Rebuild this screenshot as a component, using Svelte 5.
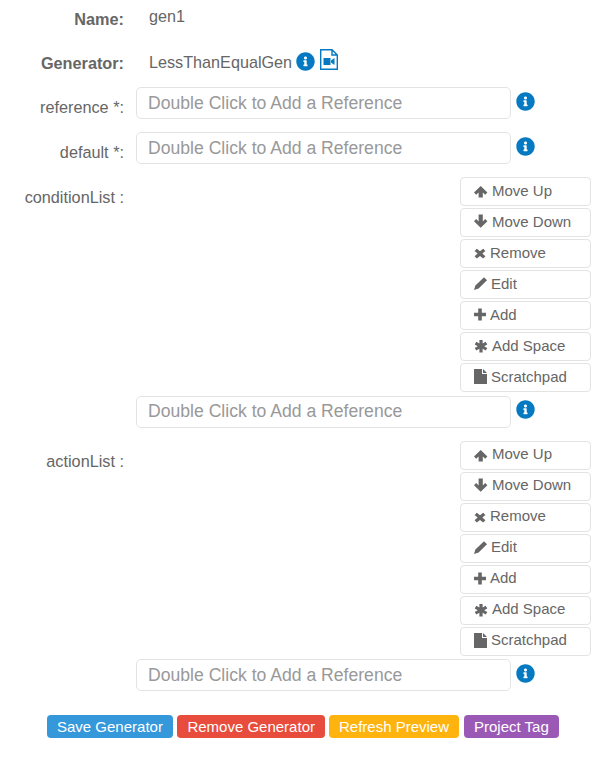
<script>
  const tools = [
    { name: 'up', label: 'Move Up', w: 14 },
    { name: 'down', label: 'Move Down', w: 14 },
    { name: 'remove', label: 'Remove', w: 12 },
    { name: 'edit', label: 'Edit', w: 13 },
    { name: 'add', label: 'Add', w: 12 },
    { name: 'space', label: 'Add Space', w: 14 },
    { name: 'file', label: 'Scratchpad', w: 13 }
  ]
  const glyphs = {
    up: 'M6.7 2 L13.4 8.6 L11.2 10.8 L8.8 8.4 V13.4 H4.6 V8.4 L2.2 10.8 L0 8.6 Z',
    down: 'M6.7 12.8 L13.4 6.2 L11.2 4 L8.8 6.4 V-.4 H4.6 V6.4 L2.2 4 L0 6.2 Z',
    remove: 'M.6 4.9 L2.8 2.7 L6 5.3 L9.2 2.7 L11.4 4.9 L8.4 7.6 L11.4 10.3 L9.2 12.5 L6 9.9 L2.8 12.5 L.6 10.3 L3.6 7.6 Z',
    edit: 'M10 .2 L13 3.2 L4.6 11.6 L0 13 L1.4 8.6 Z',
    add: 'M4.2 .5 H7.8 V4.7 H12 V8.3 H7.8 V12.5 H4.2 V8.3 H0 V4.7 H4.2 Z',
    space: 'M5.4 1 H8.6 V4.6 L11.7 2.8 L13.3 5.6 L10.2 7.2 L13.3 8.9 L11.7 11.6 L8.6 9.8 V13.4 H5.4 V9.8 L2.3 11.6 L.7 8.9 L3.8 7.2 L.7 5.6 L2.3 2.8 L5.4 4.6 Z',
    file: 'M0 -1 H8 V4 H13 V14 H0 Z M9 -1 L13 3 H9 Z'
  }
  const info = 'M256 8C119.043 8 8 119.083 8 256c0 136.997 111.043 248 248 248s248-111.003 248-248C504 119.083 392.957 8 256 8zm0 110c23.196 0 42 18.804 42 42s-18.804 42-42 42-42-18.804-42-42 18.804-42 42-42zm56 254c0 6.627-5.373 12-12 12h-88c-6.627 0-12-5.373-12-12v-24c0-6.627 5.373-12 12-12h12v-64h-12c-6.627 0-12-5.373-12-12v-24c0-6.627 5.373-12 12-12h64c6.627 0 12 5.373 12 12v100h12c6.627 0 12 5.373 12 12v24z'
</script>

{#snippet infoIcon()}
  <svg class="info" viewBox="0 0 512 512" width="19" height="19"><path d={info} fill="#0579c1" /></svg>
{/snippet}

{#snippet refInput()}
  <div class="ref">
    <input type="text" placeholder="Double Click to Add a Reference" />
    {@render infoIcon()}
  </div>
{/snippet}

{#snippet listField(title)}
  <div class="row list">
    <span class="label">{title} :</span>
    <div class="body">
      <div class="tools">
        {#each tools as t}
          <button class="tool">
            <svg viewBox="0 -1 {t.w} 17" width={t.w} height="17"><path d={glyphs[t.name]} fill="#666" /></svg>
            <span>{t.label}</span>
          </button>
        {/each}
      </div>
      {@render refInput()}
    </div>
  </div>
{/snippet}

<div class="form">
  <div class="row name">
    <span class="label bold">Name:</span>
    <span class="val">gen1</span>
  </div>
  <div class="row gen">
    <span class="label bold">Generator:</span>
    <span class="val">LessThanEqualGen</span>
    {@render infoIcon()}
    <svg class="video" viewBox="0 0 18 21" width="18" height="21">
      <path d="M.7.7 H12 L17.3 6 V20.3 H.7 Z M12 .7 V6 H17.3" fill="none" stroke="#0579c1" stroke-width="1.4" />
      <path d="M3.5 9 H10.5 V16 H3.5 Z M11 11.5 L14.5 9 V16 L11 13.5 Z" fill="#0579c1" />
    </svg>
  </div>
  <div class="row field">
    <span class="label">reference *:</span>
    {@render refInput()}
  </div>
  <div class="row field">
    <span class="label">default *:</span>
    {@render refInput()}
  </div>
  {@render listField('conditionList')}
  {@render listField('actionList')}
  <div class="actions">
    <button class="act blue">Save Generator</button>
    <button class="act red">Remove Generator</button>
    <button class="act amber">Refresh Preview</button>
    <button class="act purple">Project Tag</button>
  </div>
</div>

<style>
  :global(body) {
    background: #fff;
    font-family: "Liberation Sans", Arial, sans-serif;
    color: #666;
  }
  .form {
    padding-top: 7px;
  }
  .row {
    display: flex;
    align-items: flex-start;
  }
  .label {
    width: 124px;
    flex: none;
    text-align: right;
    font-size: 16.25px;
    line-height: 20px;
    padding-top: 10px;
  }
  .bold {
    font-weight: 700;
    padding-top: 2px;
  }
  .val {
    font-size: 16.2px;
    line-height: 20px;
    margin-left: 25px;
    margin-top: -1px;
  }
  .name {
    height: 45px;
  }
  .gen {
    height: 21px;
    margin-bottom: 14px;
    align-items: center;
    gap: 4px;
  }
  .gen .bold {
    padding-top: 0;
  }
  .gen .val {
    margin: 0 0 2px 21px;
  }
  .gen .info {
    margin-bottom: 2px;
  }
  .video {
    margin: 0 0 7px 1px;
  }
  .field {
    height: 45px;
  }
  .ref {
    display: flex;
    align-items: flex-start;
    margin-left: 12px;
    gap: 5px;
  }
  .ref .info {
    margin-top: 4.5px;
  }
  input {
    width: 375px;
    height: 32px;
    box-sizing: border-box;
    border: 1px solid #e3e3e3;
    border-radius: 5px;
    padding: 0 11px;
    font: 17.6px "Liberation Sans", Arial, sans-serif;
    color: #666;
    background: #fff;
    outline: none;
  }
  input::placeholder {
    color: #999;
    opacity: 1;
  }
  .body {
    flex: 1;
    padding-bottom: 12.8px;
  }
  .tools {
    display: flex;
    flex-direction: column;
    align-items: flex-start;
    gap: 2px;
    margin-left: 336px;
    margin-bottom: 3.8px;
  }
  .tool {
    width: 131px;
    height: 29px;
    box-sizing: border-box;
    border: 1px solid #e3e3e3;
    border-radius: 4px;
    background: #fff;
    color: #666;
    padding: 0 0 0 13px;
    text-align: left;
    font: 15px "Liberation Sans", Arial, sans-serif;
    display: flex;
    align-items: center;
    gap: 4px;
  }
  .tool span {
    margin-top: -2.8px;
  }
  .actions {
    display: flex;
    justify-content: flex-start;
    gap: 4px;
    margin: 11px 0 0 47px;
  }
  .act {
    height: 23px;
    border: none;
    border-radius: 4px;
    color: #fff;
    padding: 0 10px;
    font: 15px "Liberation Sans", Arial, sans-serif;
  }
  .blue { background: #3498db; }
  .red { background: #e74c3c; padding: 0 10.5px; }
  .amber { background: #ffb30f; padding: 0 9.5px; }
  .purple { background: #9b59b6; padding: 0 10.5px; margin-left: 1px; }
</style>
